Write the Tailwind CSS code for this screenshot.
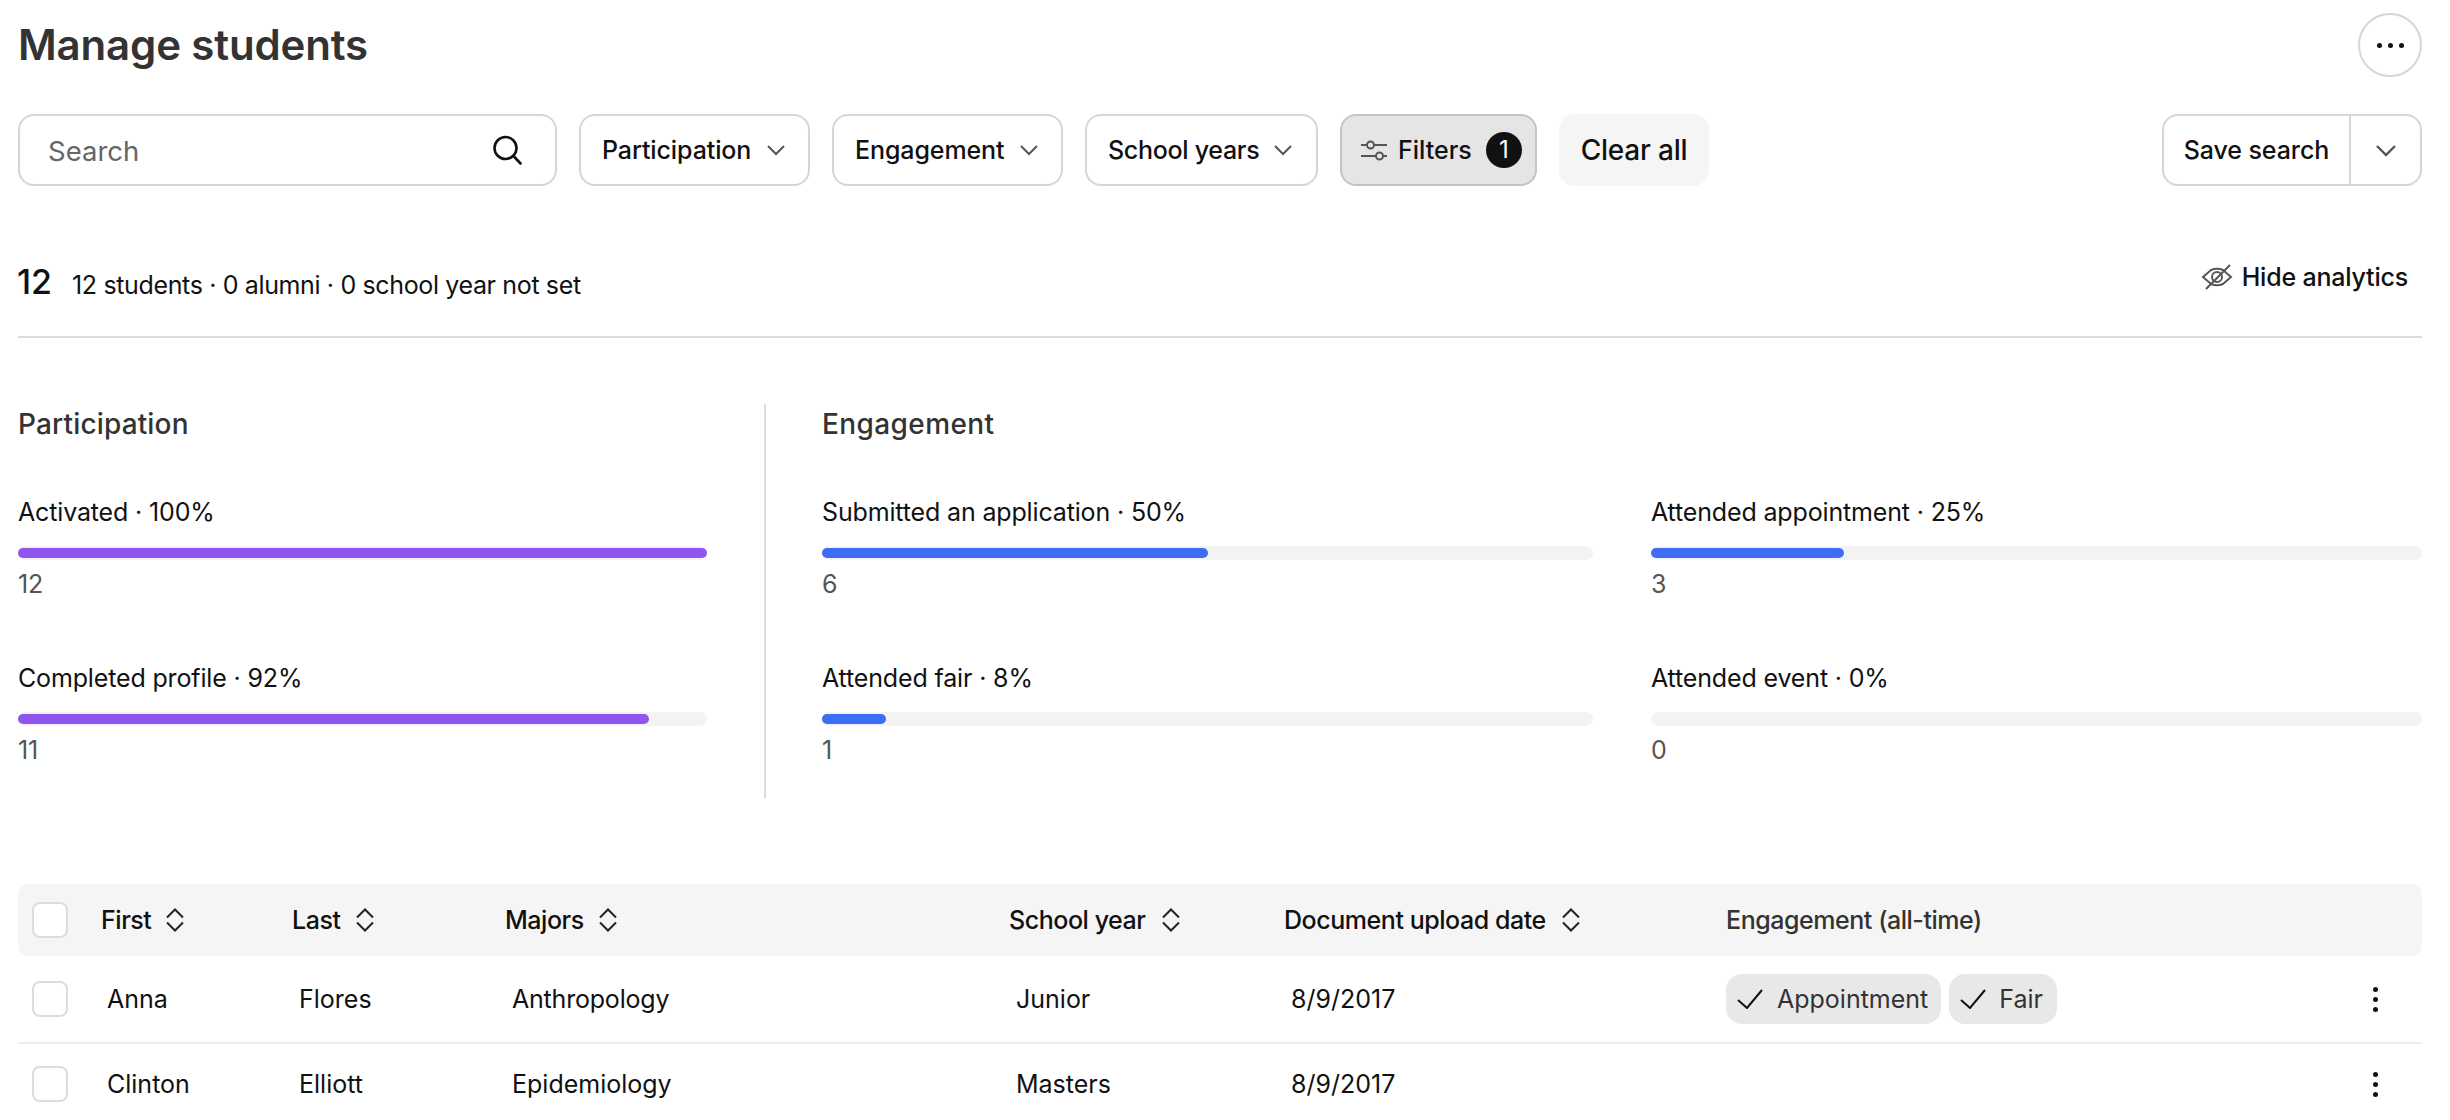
<!DOCTYPE html>
<html lang="en">
<head>
    <meta charset="UTF-8">
    <title>Manage students</title>
    <script src="https://cdn.jsdelivr.net/npm/@tailwindcss/browser@4"></script>
</head>
<body class="bg-white h-screen overflow-hidden font-[Inter,sans-serif] text-[25px] leading-[34px] text-[#111]">
    <div class="w-[2422px] pl-[18px]">

        <!-- Title -->
        <div class="flex justify-between items-center pt-[13px]">
            <h1 class="text-[42px] leading-[64px] font-semibold text-[#333] tracking-[-0.15px]">Manage students</h1>
            <button class="w-[64px] h-[64px] rounded-full border-2 border-[#d6d6d6] flex items-center justify-center gap-[6px]">
                <span class="w-[5px] h-[5px] rounded-full bg-[#111]"></span>
                <span class="w-[5px] h-[5px] rounded-full bg-[#111]"></span>
                <span class="w-[5px] h-[5px] rounded-full bg-[#111]"></span>
            </button>
        </div>

        <!-- Toolbar -->
        <div class="flex gap-[22px] mt-[37px] h-[72px]">
            <div class="w-[539px] border-2 border-[#d6d6d6] rounded-[16px] flex items-center justify-between pl-[28px] pr-[33px] text-[#666]">
                <span class="text-[27.5px] pt-[2px]">Search</span>
                <svg class="w-[30px] h-[30px]" viewBox="0 0 30 30" fill="none" stroke="#111" stroke-width="2.6" stroke-linecap="round"><circle cx="13.5" cy="13" r="11"/><path d="M21.5 21l7 7.5"/></svg>
            </div>
            <button class="w-[231px] border-2 border-[#d6d6d6] rounded-[16px] flex items-center justify-between pl-[21px] pr-[22px] font-medium tracking-[-0.1px]">
                Participation
                <svg class="w-[20px] h-[12px]" viewBox="0 0 20 12" fill="none" stroke="#555" stroke-width="2"><path d="M2 2l8 8 8-8"/></svg>
            </button>
            <button class="w-[231px] border-2 border-[#d6d6d6] rounded-[16px] flex items-center justify-between pl-[21px] pr-[22px] font-medium tracking-[-0.1px]">
                Engagement
                <svg class="w-[20px] h-[12px]" viewBox="0 0 20 12" fill="none" stroke="#555" stroke-width="2"><path d="M2 2l8 8 8-8"/></svg>
            </button>
            <button class="w-[233px] border-2 border-[#d6d6d6] rounded-[16px] flex items-center justify-between pl-[21px] pr-[23px] font-medium tracking-[-0.3px]">
                School years
                <svg class="w-[20px] h-[12px]" viewBox="0 0 20 12" fill="none" stroke="#555" stroke-width="2"><path d="M2 2l8 8 8-8"/></svg>
            </button>
            <button class="w-[197px] bg-[#e5e5e5] border-2 border-[#c4c4c4] rounded-[16px] flex items-center pl-[18px] font-medium">
                <svg class="w-[28px] h-[22px]" viewBox="0 0 28 22" fill="none" stroke="#555" stroke-width="2"><path d="M1 6h6M14 6h13M1 17h15M23 17h4"/><circle cx="10.5" cy="6" r="3.5"/><circle cx="19.5" cy="17" r="3.5"/></svg>
                <span class="ml-[10px]">Filters</span>
                <span class="ml-[14px] w-[36px] h-[36px] rounded-full bg-[#111] text-white flex items-center justify-center text-[24px] font-normal">1</span>
            </button>
            <button class="w-[150px] bg-[#f5f5f5] rounded-[16px] text-[28px] font-medium tracking-[-0.2px]">Clear all</button>
            <div class="ml-auto w-[260px] border-2 border-[#d6d6d6] rounded-[16px] flex items-center font-medium tracking-[-0.1px]">
                <span class="w-[187px] text-center border-r-2 border-[#d6d6d6] leading-[68px]">Save search</span>
                <span class="flex-1 flex justify-center">
                    <svg class="w-[22px] h-[13px]" viewBox="0 0 22 13" fill="none" stroke="#555" stroke-width="2.4"><path d="M2 2l9 9 9-9"/></svg>
                </span>
            </div>
        </div>

        <!-- Summary -->
        <div class="flex justify-between items-start h-[152px] pt-[74px] border-b-2 border-[#dcdcdc]">
            <div class="flex items-baseline gap-[20px]">
                <span class="text-[34px] leading-[44px] font-medium -ml-[1px]">12</span>
                <span class="tracking-[-0.36px]">12 students · 0 alumni · 0 school year not set</span>
            </div>
            <button class="flex items-center gap-[9px] pr-[14px] font-medium tracking-[-0.2px]">
                <svg class="w-[32px] h-[26px]" viewBox="0 0 32 26" fill="none" stroke="#555" stroke-width="2"><path d="M2 13L10 6Q16 3.5 22 6L30 13 22 20Q16 22.5 10 20z"/><circle cx="16" cy="13" r="5"/><path d="M29 1L5 25"/></svg>
                Hide analytics
            </button>
        </div>

        <!-- Analytics -->
        <div class="flex mt-[66px] h-[394px] tracking-[-0.15px]">
            <div class="w-[689px]">
                <h2 class="text-[28px] leading-[40px] font-medium text-[#333] tracking-[0.15px]">Participation</h2>
                <div class="mt-[51px]">Activated · 100%</div>
                <div class="mt-[17px] h-[14px] rounded-full bg-[#f3f3f3] py-[2px]"><div class="h-full rounded-full bg-[#9055ee]" style="width:100%"></div></div>
                <div class="mt-[7px] text-[#555]">12</div>
                <div class="mt-[60px]">Completed profile · 92%</div>
                <div class="mt-[17px] h-[14px] rounded-full bg-[#f3f3f3] py-[2px]"><div class="h-full rounded-full bg-[#9055ee]" style="width:91.6%"></div></div>
                <div class="mt-[7px] text-[#555]">11</div>
            </div>
            <div class="ml-[57px] border-l-2 border-[#dcdcdc] pl-[56px] flex-1">
                <h2 class="text-[28px] leading-[40px] font-medium text-[#333] tracking-[0.4px]">Engagement</h2>
                <div class="grid grid-cols-2 gap-x-[58px]">
                    <div>
                        <div class="mt-[51px]">Submitted an application · 50%</div>
                        <div class="mt-[17px] h-[14px] rounded-full bg-[#f3f3f3] py-[2px]"><div class="h-full rounded-full bg-[#3d6df5]" style="width:50%"></div></div>
                        <div class="mt-[7px] text-[#555]">6</div>
                        <div class="mt-[60px]">Attended fair · 8%</div>
                        <div class="mt-[17px] h-[14px] rounded-full bg-[#f3f3f3] py-[2px]"><div class="h-full rounded-full bg-[#3d6df5]" style="width:8.3%"></div></div>
                        <div class="mt-[7px] text-[#555]">1</div>
                    </div>
                    <div>
                        <div class="mt-[51px]">Attended appointment · 25%</div>
                        <div class="mt-[17px] h-[14px] rounded-full bg-[#f3f3f3] py-[2px]"><div class="h-full rounded-full bg-[#3d6df5]" style="width:25%"></div></div>
                        <div class="mt-[7px] text-[#555]">3</div>
                        <div class="mt-[60px]">Attended event · 0%</div>
                        <div class="mt-[17px] h-[14px] rounded-full bg-[#f3f3f3] py-[2px]"></div>
                        <div class="mt-[7px] text-[#555]">0</div>
                    </div>
                </div>
            </div>
        </div>

        <!-- Table -->
        <div class="mt-[86px]">
            <div class="grid grid-cols-[83px_191px_213px_504px_275px_442px_1fr_73px] items-center h-[72px] bg-[#f5f5f5] rounded-[10px] font-medium tracking-[-0.45px]">
                <div class="pl-[14px]"><div class="w-[36px] h-[36px] bg-white border-2 border-[#dcdcdc] rounded-[8px]"></div></div>
                <div class="flex items-center gap-[14px]">First
                    <svg class="w-[20px] h-[26px]" viewBox="0 0 20 26" fill="none" stroke="#222" stroke-width="2"><path d="M2 10.5l8-8 8 8M2 15.5l8 8 8-8"/></svg>
                </div>
                <div class="flex items-center gap-[14px]">Last
                    <svg class="w-[20px] h-[26px]" viewBox="0 0 20 26" fill="none" stroke="#222" stroke-width="2"><path d="M2 10.5l8-8 8 8M2 15.5l8 8 8-8"/></svg>
                </div>
                <div class="flex items-center gap-[14px]">Majors
                    <svg class="w-[20px] h-[26px]" viewBox="0 0 20 26" fill="none" stroke="#222" stroke-width="2"><path d="M2 10.5l8-8 8 8M2 15.5l8 8 8-8"/></svg>
                </div>
                <div class="flex items-center gap-[15px]">School year
                    <svg class="w-[20px] h-[26px]" viewBox="0 0 20 26" fill="none" stroke="#222" stroke-width="2"><path d="M2 10.5l8-8 8 8M2 15.5l8 8 8-8"/></svg>
                </div>
                <div class="flex items-center gap-[15px]">Document upload date
                    <svg class="w-[20px] h-[26px]" viewBox="0 0 20 26" fill="none" stroke="#222" stroke-width="2"><path d="M2 10.5l8-8 8 8M2 15.5l8 8 8-8"/></svg>
                </div>
                <div class="col-span-2 text-[#333]">Engagement (all-time)</div>
            </div>

            <div class="grid grid-cols-[83px_191px_213px_504px_275px_442px_1fr_73px] items-center h-[88px] border-b-2 border-[#eeeeee]">
                <div class="pl-[14px]"><div class="w-[36px] h-[36px] bg-white border-2 border-[#dcdcdc] rounded-[8px]"></div></div>
                <div class="pl-[6px]">Anna</div>
                <div class="pl-[7px]">Flores</div>
                <div class="pl-[7px] tracking-[-0.2px]">Anthropology</div>
                <div class="pl-[7px]">Junior</div>
                <div class="pl-[7px]">8/9/2017</div>
                <div class="flex gap-[8px]">
                    <span class="h-[50px] pl-[11px] pr-[13px] rounded-[16px] bg-[#e8e8e8] flex items-center gap-[14px] text-[#333]">
                        <svg class="w-[26px] h-[20px]" viewBox="0 0 26 20" fill="none" stroke="#111" stroke-width="2"><path d="M1 11l9 8L25 1"/></svg>
                        Appointment
                    </span>
                    <span class="h-[50px] pl-[11px] pr-[14px] rounded-[16px] bg-[#e8e8e8] flex items-center gap-[13px] text-[#333]">
                        <svg class="w-[26px] h-[20px]" viewBox="0 0 26 20" fill="none" stroke="#111" stroke-width="2"><path d="M1 11l9 8L25 1"/></svg>
                        Fair
                    </span>
                </div>
                <div class="flex flex-col items-center gap-[5px] w-[6px] ml-[23px]">
                    <span class="w-[5px] h-[5px] rounded-full bg-[#111]"></span>
                    <span class="w-[5px] h-[5px] rounded-full bg-[#111]"></span>
                    <span class="w-[5px] h-[5px] rounded-full bg-[#111]"></span>
                </div>
            </div>

            <div class="grid grid-cols-[83px_191px_213px_504px_275px_442px_1fr_73px] items-center h-[80px]">
                <div class="pl-[14px]"><div class="w-[36px] h-[36px] bg-white border-2 border-[#dcdcdc] rounded-[8px]"></div></div>
                <div class="pl-[6px]">Clinton</div>
                <div class="pl-[7px]">Elliott</div>
                <div class="pl-[7px]">Epidemiology</div>
                <div class="pl-[7px]">Masters</div>
                <div class="pl-[7px]">8/9/2017</div>
                <div></div>
                <div class="flex flex-col items-center gap-[5px] w-[6px] ml-[23px]">
                    <span class="w-[5px] h-[5px] rounded-full bg-[#111]"></span>
                    <span class="w-[5px] h-[5px] rounded-full bg-[#111]"></span>
                    <span class="w-[5px] h-[5px] rounded-full bg-[#111]"></span>
                </div>
            </div>
        </div>
    </div>
</body>
</html>
